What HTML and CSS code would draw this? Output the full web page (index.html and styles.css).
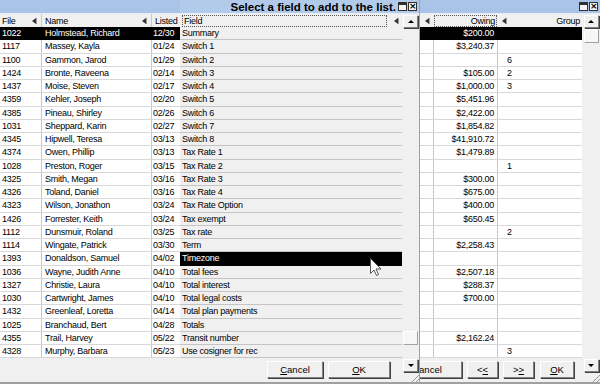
FILE: index.html
```html
<!DOCTYPE html>
<html lang="en">
<head>
    <meta charset="UTF-8">
    <title>Field picker</title>
    <link rel="stylesheet" href="styles.css">
</head>
<body>
    <div class="win">
        <div class="titlebar">
            <span class="tb-btns"><i class="tb-max"></i><i class="tb-close">×</i></span>
        </div>
        <div class="win-body">
            <div class="win-main">
                <div class="row head">
                    <div class="c c-file"><span>File</span><i class="arr"></i></div>
                    <div class="c c-name"><span>Name</span><i class="arr"></i></div>
                    <div class="c c-listed">Listed</div>
                    <div class="c c-hidden"></div>
                    <div class="c c-narrow"><i class="arr"></i></div>
                    <div class="c c-owing"><span class="focus">Owing</span></div>
                    <div class="c c-group"><i class="arr"></i><span>Group</span></div>
                </div>
                <div id="main-rows"></div>
                <div class="win-foot">
                    <button class="btn btn-cancel"><u>C</u>ancel</button>
                    <button class="btn btn-nav">&lt;<u>&lt;</u></button>
                    <button class="btn btn-nav">&gt;<u>&gt;</u></button>
                    <button class="btn btn-ok"><u>O</u>K</button>
                </div>
            </div>
            <div class="vscroll">
                <div class="sbtn up"></div>
                <div class="track"><div class="thumb top"></div></div>
                <div class="sbtn down"></div>
                <div class="grip"></div>
            </div>
        </div>
    </div>

    <div class="popup">
        <div class="titlebar">
            <span class="ptitle">Select a field to add to the list.</span>
            <span class="tb-btns"><i class="tb-max"></i><i class="tb-close">×</i></span>
        </div>
        <div class="win-body">
            <div class="pop-main">
                <div class="pop-head">
                    <span class="focus field-box">Field</span><i class="arr"></i>
                </div>
                <div id="field-rows"></div>
                <div class="pop-foot">
                    <button class="btn btn-pcancel"><u>C</u>ancel</button>
                    <button class="btn btn-pok"><u>O</u>K</button>
                </div>
            </div>
            <div class="vscroll pop-scroll">
                <div class="sbtn up"></div>
                <div class="track"><div class="thumb low"></div></div>
                <div class="sbtn down"></div>
                <div class="grip"></div>
            </div>
        </div>
    </div>

    <svg class="cursor" width="12" height="19" viewBox="0 0 12 19">
        <path d="M0.5 0.5 L0.5 15.5 L4 12 L6.5 17.5 L8.5 16.5 L6 11 L11 11 Z" fill="#fff" stroke="#555" stroke-width="1"/>
    </svg>

    <script>
        const rows = [
            ['1022', 'Holmstead, Richard', '12/30', '$200.00', ''],
            ['1117', 'Massey, Kayla', '01/24', '$3,240.37', ''],
            ['1100', 'Gammon, Jarod', '01/29', '', '6'],
            ['1424', 'Bronte, Raveena', '02/14', '$105.00', '2'],
            ['1437', 'Moise, Steven', '02/17', '$1,000.00', '3'],
            ['4359', 'Kehler, Joseph', '02/20', '$5,451.96', ''],
            ['4385', 'Pineau, Shirley', '02/26', '$2,422.00', ''],
            ['1031', 'Sheppard, Karin', '02/27', '$1,854.82', ''],
            ['4345', 'Hipwell, Teresa', '03/13', '$41,910.72', ''],
            ['4374', 'Owen, Phillip', '03/13', '$1,479.89', ''],
            ['1028', 'Preston, Roger', '03/15', '', '1'],
            ['4325', 'Smith, Megan', '03/16', '$300.00', ''],
            ['4326', 'Toland, Daniel', '03/16', '$675.00', ''],
            ['4323', 'Wilson, Jonathon', '03/24', '$400.00', ''],
            ['1426', 'Forrester, Keith', '03/24', '$650.45', ''],
            ['1112', 'Dunsmuir, Roland', '03/25', '', '2'],
            ['1114', 'Wingate, Patrick', '03/30', '$2,258.43', ''],
            ['1393', 'Donaldson, Samuel', '04/02', '', ''],
            ['1036', 'Wayne, Judith Anne', '04/10', '$2,507.18', ''],
            ['1327', 'Christie, Laura', '04/10', '$288.37', ''],
            ['1030', 'Cartwright, James', '04/10', '$700.00', ''],
            ['1432', 'Greenleaf, Loretta', '04/14', '', ''],
            ['1025', 'Branchaud, Bert', '04/28', '', ''],
            ['4355', 'Trail, Harvey', '05/22', '$2,162.24', ''],
            ['4328', 'Murphy, Barbara', '05/23', '', '3']
        ];

        const fields = [
            'Summary', 'Switch 1', 'Switch 2', 'Switch 3', 'Switch 4', 'Switch 5',
            'Switch 6', 'Switch 7', 'Switch 8', 'Tax Rate 1', 'Tax Rate 2', 'Tax Rate 3',
            'Tax Rate 4', 'Tax Rate Option', 'Tax exempt', 'Tax rate', 'Term', 'Timezone',
            'Total fees', 'Total interest', 'Total legal costs', 'Total plan payments',
            'Totals', 'Transit number', 'Use cosigner for rec'
        ];

        const mainRows = document.getElementById('main-rows');
        rows.forEach((r, index) => {
            const div = document.createElement('div');
            div.className = 'row' + (index === 0 ? ' selected' : '');
            div.innerHTML = `
                <div class="c c-file">${r[0]}</div>
                <div class="c c-name">${r[1]}</div>
                <div class="c c-listed">${r[2]}</div>
                <div class="c c-hidden"></div>
                <div class="c c-narrow"></div>
                <div class="c c-owing">${r[3]}</div>
                <div class="c c-group">${r[4]}</div>
            `;
            mainRows.appendChild(div);
        });

        const fieldRows = document.getElementById('field-rows');
        fields.forEach((f, index) => {
            const div = document.createElement('div');
            div.className = 'field' + (index === 17 ? ' selected' : '');
            div.innerText = f;
            fieldRows.appendChild(div);
        });
    </script>
</body>
</html>
```

FILE: styles.css
```css
body {
    margin: 0;
    font-family: "Liberation Sans", Arial, sans-serif;
    font-size: 9px;
    letter-spacing: -0.25px;
    color: #000;
    background-color: #f0f0f0;
    width: 600px;
    height: 384px;
    overflow: hidden;
    position: relative;
}

.win {
    width: 600px;
    height: 382px;
    border-bottom: 2px solid #a0a0a0;
}

.titlebar {
    height: 13px;
    background-color: #a9c4e6;
    border-bottom: 1px solid #e8eef6;
    display: flex;
    justify-content: flex-end;
    align-items: center;
}

.tb-btns {
    display: flex;
    gap: 0;
    margin-right: 2px;
}

.tb-max, .tb-close {
    width: 7px;
    height: 7px;
    background-color: #f4f4f4;
    border: 1px solid #303030;
    font-style: normal;
    font-family: "DejaVu Sans", sans-serif;
    font-weight: bold;
    font-size: 9px;
    letter-spacing: 0;
    line-height: 7px;
    text-align: center;
}

.tb-max {
    box-shadow: inset 0 2px 0 #303030, inset 0 0 0 2px #f4f4f4;
    margin-right: 1px;
}

.win-body {
    display: flex;
}

.win-main {
    width: 582px;
}

.row {
    display: grid;
    grid-template-columns: 42px 110px 28px 240px 14px 64px 84px;
    height: 13.25px;
    box-sizing: border-box;
    border-bottom: 1px solid #d8d8d8;
    background-color: #fff;
    line-height: 12px;
}

.row.head {
    height: 13px;
    background-color: #f0f0f0;
    border-bottom: none;
}

.c {
    overflow: hidden;
    white-space: nowrap;
    box-sizing: border-box;
}

.c-file {
    padding-left: 2px;
    border-right: 1px solid #c8c8c8;
}

.c-name {
    padding-left: 3px;
    border-right: 1px solid #c8c8c8;
}

.c-listed {
    padding-left: 1px;
}

.c-narrow {
    border-right: 1px solid #c8c8c8;
}

.c-owing {
    text-align: right;
    padding-right: 3px;
    border-right: 1px solid #c8c8c8;
}

.c-group {
    padding-left: 9px;
}

.head .c {
    display: flex;
    align-items: center;
}

.head .c-file, .head .c-name {
    justify-content: space-between;
    padding-right: 5px;
}

.head .c-listed {
    padding-left: 3px;
}

.head .c-narrow {
    padding-left: 5px;
    border-right: none;
}

.head .c-owing {
    padding: 1px 1px 1px 0;
    border-right: none;
}

.head .c-owing .focus {
    flex: 1;
    text-align: right;
}

.head .c-group {
    justify-content: space-between;
    padding-left: 4px;
    padding-right: 2px;
}

.focus {
    border: 1px dotted #555;
    height: 10px;
    line-height: 10px;
    padding: 0 1px;
}

.arr {
    display: inline-block;
    width: 0;
    height: 0;
    border-top: 3px solid transparent;
    border-bottom: 3px solid transparent;
    border-right: 4px solid #333;
    box-shadow: 1px 0 0 #999;
}

.row.selected {
    background-color: #000;
    color: #fff;
    border-bottom-color: #000;
}

.row.selected .c {
    border-right-color: #000;
}

.win-foot {
    height: 24px;
    display: flex;
    justify-content: flex-end;
    align-items: flex-start;
    padding: 3px 8px 0 0;
    box-sizing: border-box;
    gap: 5px;
}

.btn {
    font-family: inherit;
    font-size: 9.5px;
    letter-spacing: 0;
    height: 17px;
    padding: 0;
    background-color: #f0f0f0;
    border: 1px solid;
    border-color: #fff #808080 #808080 #fff;
    box-shadow: 1px 1px 0 #404040;
    color: #000;
}

.btn-cancel { width: 70px; }
.btn-nav { width: 31px; }
.btn-ok { width: 34px; margin-left: 1px; }

.vscroll {
    width: 18px;
    display: flex;
    flex-direction: column;
    align-items: center;
    padding-top: 1px;
    height: 368px;
}

.sbtn {
    width: 13px;
    height: 11px;
    background-color: #f0f0f0;
    border: 1px solid;
    border-color: #fff #808080 #808080 #fff;
    box-shadow: 1px 1px 0 #404040;
    display: flex;
    align-items: center;
    justify-content: center;
    flex: none;
}

.sbtn::after {
    content: "";
    border-left: 3px solid transparent;
    border-right: 3px solid transparent;
}

.sbtn.up::after {
    border-bottom: 3px solid #000;
}

.sbtn.down::after {
    border-top: 3px solid #000;
}

.track {
    flex: 1;
    width: 100%;
    display: flex;
    flex-direction: column;
    align-items: center;
}

.thumb {
    width: 13px;
    height: 12px;
    background-color: #f6f6f6;
    border: 1px solid;
    border-color: #fff #a0a0a0 #a0a0a0 #fff;
}

.thumb.top {
    margin-top: 1px;
}

.thumb.low {
    margin-top: auto;
    margin-bottom: 14px;
}

.grip {
    width: 10px;
    height: 10px;
    margin-top: 1px;
    align-self: flex-end;
    background: repeating-linear-gradient(135deg, transparent 0 2px, #999 2px 3px);
    clip-path: polygon(100% 0, 100% 100%, 0 100%);
}

.popup {
    position: absolute;
    left: 180px;
    top: 0;
    width: 240px;
    height: 382px;
    background-color: #f0f0f0;
    border-right: 1px solid #a0a0a0;
    box-sizing: border-box;
}

.popup .titlebar {
    background-color: #b2cbea;
}

.ptitle {
    font-weight: bold;
    font-size: 11.5px;
    letter-spacing: 0;
    margin-right: 2px;
}

.pop-main {
    width: 222px;
}

.pop-head {
    height: 13px;
    display: flex;
    align-items: center;
    padding-left: 2px;
}

.field-box {
    width: 201px;
}

.pop-head .arr {
    margin-left: 7px;
}

.field {
    height: 13.25px;
    line-height: 12px;
    padding-left: 2px;
    box-sizing: border-box;
    border-bottom: 1px solid #c4c4c4;
    white-space: nowrap;
}

.field.selected {
    background-color: #000;
    color: #fff;
    border-bottom-color: #000;
}

.pop-foot {
    height: 24px;
    display: flex;
    justify-content: flex-end;
    align-items: flex-start;
    padding: 3px 12px 0 0;
    box-sizing: border-box;
    gap: 5px;
}

.btn-pcancel { width: 56px; }
.btn-pok { width: 62px; }

.pop-scroll {
    width: 17px;
}

.cursor {
    position: absolute;
    left: 370px;
    top: 258px;
}
```
